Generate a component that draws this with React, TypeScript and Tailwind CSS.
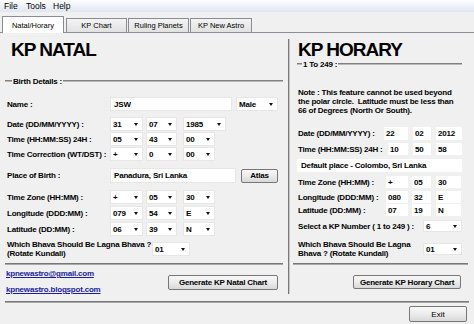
import React from 'react'

function Arrow() {
  return <span className="h-0 w-0 border-x-[2.5px] border-t-[3px] border-x-transparent border-t-[#111]" />
}

function Sel({ v, w, h = 'h-[14px]' }: { v: string; w: string; h?: string }) {
  return (
    <div className={`${w} ${h} flex items-center justify-between border border-[#e6e6e6] bg-white pl-[2px] pr-[4px] font-bold`}>
      <span>{v}</span>
      <Arrow />
    </div>
  )
}

function Box({ v, w }: { v: string; w: string }) {
  return <div className={`${w} flex h-full items-center bg-white pl-[2px] font-bold`}>{v}</div>
}

function Btn({ children, className }: { children: React.ReactNode; className: string }) {
  return (
    <div
      className={`flex items-center justify-center rounded-[2px] border border-[#777] bg-gradient-to-b from-[#f7f7f7] via-[#ececec] to-[#d8d8d8] ${className}`}
    >
      {children}
    </div>
  )
}

function Rule({ className }: { className: string }) {
  return <div className={`h-[2px] border-t border-b border-t-[#777] border-b-[#a8a8a8] ${className}`} />
}

function GroupTitle({ text, pre, className }: { text: string; pre: string; className: string }) {
  return (
    <div className={`flex items-center font-bold ${className}`}>
      <div className={`${pre} h-[2px] border-t border-b border-t-[#808080] border-b-[#b8b8b8]`} />
      <span className="px-[1px]">{text}</span>
      <div className="h-[2px] flex-1 border-t border-b border-t-[#808080] border-b-[#b8b8b8]" />
    </div>
  )
}

function Row({ label, lw, className, children }: { label: string; lw: string; className: string; children: React.ReactNode }) {
  return (
    <div className={`flex items-center ${className}`}>
      <div className={`${lw} shrink-0 font-bold`}>{label}</div>
      {children}
    </div>
  )
}

function Tab({ label, active, className }: { label: string; active?: boolean; className: string }) {
  return (
    <div
      className={
        active
          ? `relative -mb-px flex h-[17px] items-center justify-center border border-b-0 border-[#898c95] bg-white ${className}`
          : `flex h-[14px] items-center justify-center border border-b-0 border-[#898c95] bg-gradient-to-b from-[#f4f4f4] to-[#e1e1e1] ${className}`
      }
    >
      {label}
    </div>
  )
}

export default function App() {
  return (
    <div className="h-[324px] w-[474px] overflow-hidden bg-[#f0f0f0] font-['Liberation_Sans',Arial,sans-serif] text-[8px] leading-[9px] tracking-[-0.2px] text-black">
      {/* menu */}
      <div className="flex h-[12px] items-center bg-gradient-to-b from-[#fdfeff] to-[#dfe7f3] pl-[4px] text-[8.5px] tracking-normal">
        <span className="w-[22px]">File</span>
        <span className="w-[27px]">Tools</span>
        <span>Help</span>
      </div>

      {/* tabs */}
      <div className="flex h-[21px] items-end border-b border-[#898c95] pl-[2px] text-[7.5px] tracking-normal">
        <Tab label="Natal/Horary" active className="w-[62px]" />
        <Tab label="KP Chart" className="ml-[2px] w-[61px]" />
        <Tab label="Ruling Planets" className="ml-[1px] w-[61px]" />
        <Tab label="KP New Astro" className="ml-[1px] w-[62px]" />
      </div>

      <div className="flex h-[268px]">
        {/* natal */}
        <div className="w-[288px] shrink-0">
          <div className="mt-[7px] h-[20px] pl-[11px] text-[19px] font-bold leading-[20px] tracking-[-1px]">KP NATAL</div>
          <GroupTitle text="Birth Details :" pre="w-[7px]" className="mx-[5px] mt-[16px] h-[10px]" />

          <div className="pl-[7px]">
            <Row label="Name :" lw="w-[103px]" className="mt-[11px] h-[14px]">
              <div className="flex h-[14px] w-[122px] items-center border border-[#e6e6e6] bg-white pl-[3px] font-bold">JSW</div>
              <Sel v="Male" w="ml-[4px] w-[42px]" />
            </Row>
            <Row label="Date (DD/MM/YYYY) :" lw="w-[103px]" className="mt-[6px] h-[14px]">
              <Sel v="31" w="w-[33px]" />
              <Sel v="07" w="ml-[3px] w-[31px]" />
              <Sel v="1985" w="ml-[6px] w-[43px]" />
            </Row>
            <Row label="Time (HH:MM:SS) 24H :" lw="w-[103px]" className="mt-[1px] h-[14px]">
              <Sel v="05" w="w-[33px]" />
              <Sel v="43" w="ml-[3px] w-[31px]" />
              <Sel v="00" w="ml-[6px] w-[32px]" />
            </Row>
            <Row label="Time Correction (WT/DST) :" lw="w-[103px]" className="mt-[1px] h-[14px]">
              <Sel v="+" w="w-[33px]" />
              <Sel v="0" w="ml-[3px] w-[31px]" />
              <Sel v="00" w="ml-[6px] w-[32px]" />
            </Row>
            <Row label="Place of Birth :" lw="w-[103px]" className="mt-[7px] h-[15px]">
              <div className="flex h-[15px] w-[126px] items-center border border-[#e6e6e6] bg-white pl-[3px] font-bold">
                Panadura, Sri Lanka
              </div>
              <Btn className="ml-[5px] h-[14px] w-[37px] font-bold">Atlas</Btn>
            </Row>
            <Row label="Time Zone (HH:MM) :" lw="w-[103px]" className="mt-[7px] h-[14px]">
              <Sel v="+" w="w-[33px]" />
              <Sel v="05" w="ml-[3px] w-[31px]" />
              <Sel v="30" w="ml-[6px] w-[32px]" />
            </Row>
            <Row label="Longitude (DDD:MM) :" lw="w-[103px]" className="mt-[2px] h-[14px]">
              <Sel v="079" w="w-[33px]" />
              <Sel v="54" w="ml-[3px] w-[31px]" />
              <Sel v="E" w="ml-[6px] w-[32px]" />
            </Row>
            <Row label="Latitude (DD:MM) :" lw="w-[103px]" className="mt-[2px] h-[14px]">
              <Sel v="06" w="w-[33px]" />
              <Sel v="39" w="ml-[3px] w-[31px]" />
              <Sel v="N" w="ml-[6px] w-[32px]" />
            </Row>
            <div className="mt-[4px] flex h-[18px] items-center">
              <div className="w-[145px] font-bold">
                Which Bhava Should Be Lagna Bhava ?
                <br />
                (Rotate Kundali)
              </div>
              <Sel v="01" w="w-[38px]" />
            </div>
          </div>

          <Rule className="mx-[5px] mt-[5px]" />

          <div className="flex items-start">
            <div className="w-[168px] pl-[6px] font-bold text-[#1c1c9c] underline">
              <div className="mt-[4px]">kpnewastro@gmail.com</div>
              <div className="mt-[7px]">kpnewastro.blogspot.com</div>
            </div>
            <Btn className="mt-[10px] h-[15px] w-[110px] font-bold">Generate KP Natal Chart</Btn>
          </div>
        </div>

        {/* divider */}
        <div className="mt-[6px] h-[255px] w-[2px] shrink-0 border-l border-r border-l-[#777] border-r-[#c8c8c8]" />

        {/* horary */}
        <div className="flex-1">
          <div className="mt-[7px] h-[20px] pl-[8px] text-[19px] font-bold leading-[20px] tracking-[-1px]">KP HORARY</div>
          <GroupTitle text="1 To 249 :" pre="w-[5px]" className="ml-[7px] mr-[12px] h-[8px]" />

          <div className="pl-[8px]">
            <div className="mt-[20px] font-bold">
              Note : This feature cannot be used beyond
              <br />
              the polar circle.&nbsp; Latitude must be less than
              <br />
              66 of Degrees (North Or South).
            </div>

            <Row label="Date (DD/MM/YYYY) :" lw="w-[86px]" className="mt-[12px] h-[13px]">
              <Box v="22" w="w-[24px]" />
              <Box v="02" w="ml-[5px] w-[18px]" />
              <Box v="2012" w="ml-[5px] w-[26px]" />
            </Row>
            <Row label="Time (HH:MM:SS) 24H :" lw="w-[90px]" className="mt-[3px] h-[12px]">
              <Box v="10" w="w-[20px]" />
              <Box v="50" w="ml-[5px] w-[18px]" />
              <Box v="58" w="ml-[5px] w-[26px]" />
            </Row>
            <div className="mt-[4px] flex h-[13px] w-[165px] -translate-x-px items-center bg-white pl-[4px] font-bold">
              Default place - Colombo, Sri Lanka
            </div>
            <Row label="Time Zone (HH:MM) :" lw="w-[88px]" className="mt-[4px] h-[12px]">
              <Box v="+" w="w-[22px]" />
              <Box v="05" w="ml-[4px] w-[19px]" />
              <Box v="30" w="ml-[5px] w-[25px]" />
            </Row>
            <Row label="Longitude (DDD:MM) :" lw="w-[88px]" className="mt-[3px] h-[12px]">
              <Box v="080" w="w-[22px]" />
              <Box v="32" w="ml-[4px] w-[19px]" />
              <Box v="E" w="ml-[5px] w-[25px]" />
            </Row>
            <Row label="Latitude (DD:MM) :" lw="w-[88px]" className="mt-[1px] h-[12px]">
              <Box v="07" w="w-[22px]" />
              <Box v="19" w="ml-[4px] w-[19px]" />
              <Box v="N" w="ml-[5px] w-[25px]" />
            </Row>
            <Row label="Select a KP Number ( 1 to 249 ) :" lw="w-[125px]" className="mt-[4px] h-[12px]">
              <Sel v="6" w="w-[39px]" h="h-[12px]" />
            </Row>
            <div className="mt-[8px] flex h-[18px] items-center">
              <div className="w-[125px] font-bold">
                Which Bhava Should Be Lagna
                <br />
                Bhava ? (Rotate Kundali)
              </div>
              <Sel v="01" w="w-[39px]" h="h-[12px]" />
            </div>
          </div>

          <Rule className="ml-[3px] mr-[6px] mt-[5px]" />
          <Btn className="ml-[63px] mt-[10px] h-[14px] w-[108px] font-bold">Generate KP Horary Chart</Btn>
        </div>
      </div>

      <Rule className="mx-[5px]" />
      <div className="flex justify-end pr-[7px]">
        <Btn className="mt-[3px] h-[16px] w-[58px] tracking-normal">Exit</Btn>
      </div>
    </div>
  )
}
